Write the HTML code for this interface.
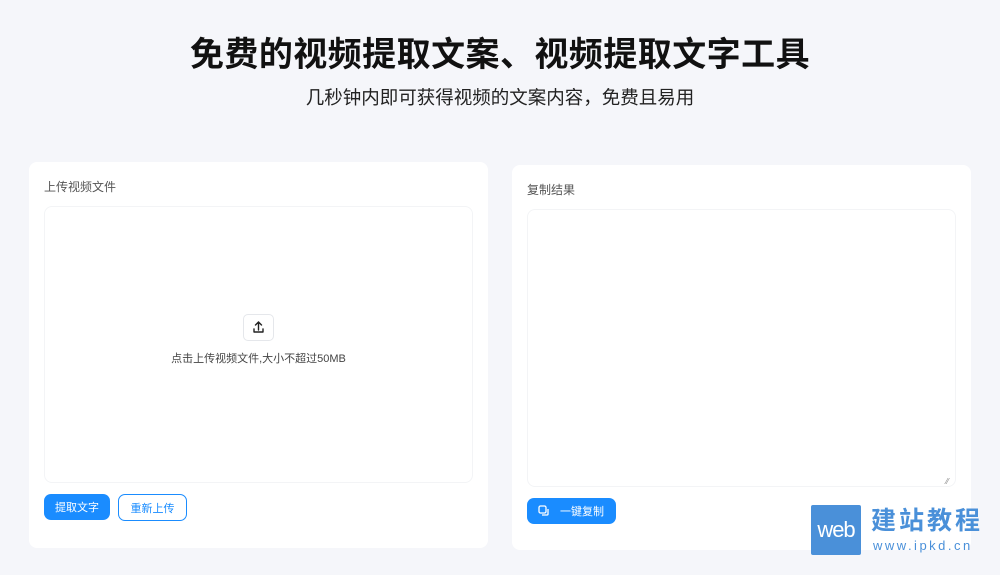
<!DOCTYPE html>
<html><head><meta charset="utf-8"><style>
*{margin:0;padding:0;box-sizing:border-box}
body{width:1000px;height:575px;background:#f5f6fa;font-family:"Liberation Sans","Noto Sans CJK SC",sans-serif;position:relative;overflow:hidden;color:#333}
.abs{position:absolute}
h1{position:absolute;top:27px;left:0;width:1000px;text-align:center;font-size:34px;font-weight:700;color:#111;letter-spacing:0.45px}
.sub{top:84px;left:0;width:1000px;text-align:center;font-size:18.5px;color:#222}
.card{background:#fff;border-radius:8px}
.lbl{font-size:12px;color:#555}
.zone{border:1px solid #f3f4f6;border-radius:8px;background:#fff}
.btn{border-radius:7px;font-size:11px;display:flex;align-items:center;justify-content:center}
</style></head><body>
<h1>免费的视频提取文案、视频提取文字工具</h1>
<div class="abs sub">几秒钟内即可获得视频的文案内容，免费且易用</div>

<div class="abs card" style="left:29px;top:162px;width:459px;height:386px"></div>
<div class="abs lbl" style="left:44px;top:178px">上传视频文件</div>
<div class="abs zone" style="left:44px;top:206px;width:429px;height:277px"></div>
<div class="abs" style="left:243px;top:314px;width:31px;height:27px;border:1px solid #e5e7eb;border-radius:5px;background:#fff">
<svg width="31" height="27" viewBox="0 0 31 27" style="position:absolute;left:-1px;top:-1px"><path d="M15.5 8v8M12.5 11l3-3 3 3M11 15v3h9v-3" fill="none" stroke="#222" stroke-width="1.4" stroke-linecap="round" stroke-linejoin="round"/></svg></div>
<div class="abs" style="left:44px;top:350px;width:429px;text-align:center;font-size:11px;color:#444">点击上传视频文件,大小不超过50MB</div>
<div class="abs btn" style="left:44px;top:494px;width:66px;height:26px;background:#1a8cff;color:#fff">提取文字</div>
<div class="abs btn" style="left:118px;top:494px;width:69px;height:27px;border:1px solid #1a8cff;color:#1a8cff;background:#fff">重新上传</div>

<div class="abs card" style="left:512px;top:165px;width:459px;height:385px"></div>
<div class="abs lbl" style="left:527px;top:181px">复制结果</div>
<div class="abs zone" style="left:527px;top:209px;width:429px;height:278px"></div>
<div class="abs" style="left:946px;top:477px;color:#888;font-size:8px">⁄⁄</div>
<div class="abs btn" style="left:527px;top:498px;width:89px;height:26px;background:#1a8cff;color:#fff;justify-content:flex-start;padding-left:10px">
<svg width="14" height="14" viewBox="0 0 14 14"><rect x="2" y="2" width="7" height="7" rx="1.5" fill="none" stroke="#fff" stroke-width="1.3"/><path d="M5 11h5a1 1 0 0 0 1-1V5" fill="none" stroke="#fff" stroke-width="1.3"/></svg>
<span style="margin-left:9px">一键复制</span></div>

<div class="abs" style="left:811px;top:505px;width:50px;height:50px;background:#4a90d9;border-radius:2px;color:#fff;font-size:22px;line-height:50px;text-align:center;letter-spacing:-1px">web</div>
<div class="abs" style="left:871px;top:507px;font-size:25px;color:#4a90d9;font-weight:700;letter-spacing:3px;line-height:28px">建站教程</div>
<div class="abs" style="left:873px;top:538px;font-size:13px;color:#4a90d9;letter-spacing:2.5px">www.ipkd.cn</div>
</body></html>
